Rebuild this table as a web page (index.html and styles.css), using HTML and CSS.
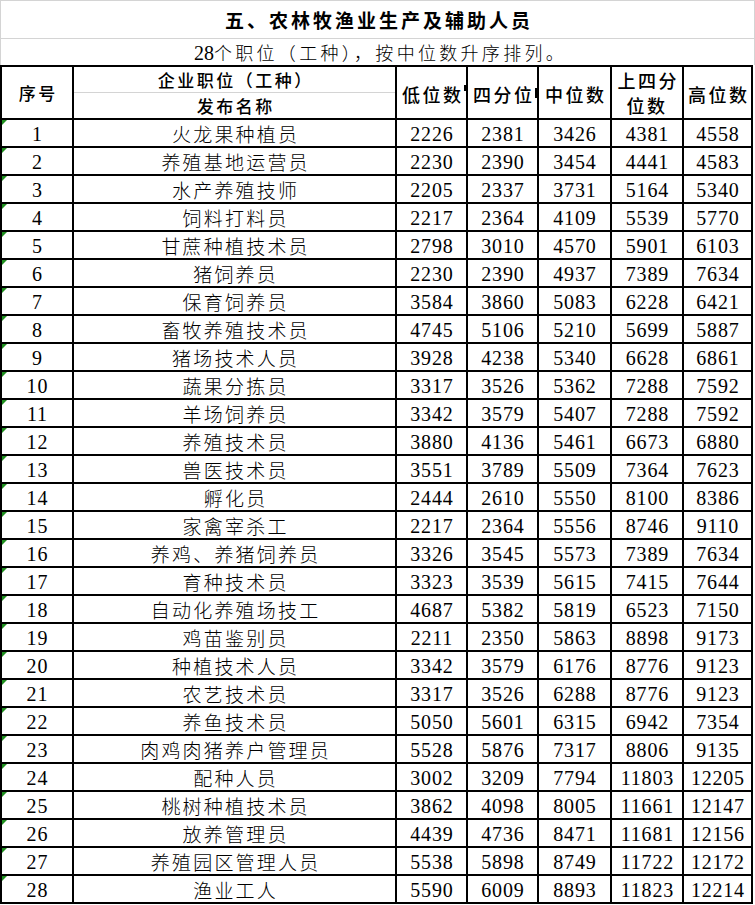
FILE: index.html
```html
<!DOCTYPE html>
<html lang="zh-CN">
<head>
<meta charset="utf-8">
<title>五、农林牧渔业生产及辅助人员</title>
<link rel="stylesheet" href="styles.css">
</head>
<body>
<div class="sheet">
  <div class="title">五、农林牧渔业生产及辅助人员</div>
  <div class="subtitle"><span class="num">28</span>个职位（工种），按中位数升序排列。</div>
  <table class="grid">
    <colgroup>
      <col class="c-no"><col class="c-name"><col class="c-v"><col class="c-v"><col class="c-v3"><col class="c-v4"><col class="c-v5">
    </colgroup>
    <thead>
      <tr class="h1">
        <th rowspan="2" class="hs">序号</th>
        <th class="hn top">企业职位（工种）</th>
        <th rowspan="2" class="hv clip-a">低位数</th>
        <th rowspan="2" class="hv clip-b">四分位</th>
        <th rowspan="2" class="hv">中位数</th>
        <th rowspan="2" class="hv two">上四分<br>位数</th>
        <th rowspan="2" class="hv">高位数</th>
      </tr>
      <tr class="h2">
        <th class="hn bot">发布名称</th>
      </tr>
    </thead>
    <tbody>
      <tr><td class="no">1</td><td class="nm">火龙果种植员</td><td>2226</td><td>2381</td><td>3426</td><td>4381</td><td>4558</td></tr>
      <tr><td class="no">2</td><td class="nm">养殖基地运营员</td><td>2230</td><td>2390</td><td>3454</td><td>4441</td><td>4583</td></tr>
      <tr><td class="no">3</td><td class="nm">水产养殖技师</td><td>2205</td><td>2337</td><td>3731</td><td>5164</td><td>5340</td></tr>
      <tr><td class="no">4</td><td class="nm">饲料打料员</td><td>2217</td><td>2364</td><td>4109</td><td>5539</td><td>5770</td></tr>
      <tr><td class="no">5</td><td class="nm">甘蔗种植技术员</td><td>2798</td><td>3010</td><td>4570</td><td>5901</td><td>6103</td></tr>
      <tr><td class="no">6</td><td class="nm">猪饲养员</td><td>2230</td><td>2390</td><td>4937</td><td>7389</td><td>7634</td></tr>
      <tr><td class="no">7</td><td class="nm">保育饲养员</td><td>3584</td><td>3860</td><td>5083</td><td>6228</td><td>6421</td></tr>
      <tr><td class="no">8</td><td class="nm">畜牧养殖技术员</td><td>4745</td><td>5106</td><td>5210</td><td>5699</td><td>5887</td></tr>
      <tr><td class="no">9</td><td class="nm">猪场技术人员</td><td>3928</td><td>4238</td><td>5340</td><td>6628</td><td>6861</td></tr>
      <tr><td class="no">10</td><td class="nm">蔬果分拣员</td><td>3317</td><td>3526</td><td>5362</td><td>7288</td><td>7592</td></tr>
      <tr><td class="no">11</td><td class="nm">羊场饲养员</td><td>3342</td><td>3579</td><td>5407</td><td>7288</td><td>7592</td></tr>
      <tr><td class="no">12</td><td class="nm">养殖技术员</td><td>3880</td><td>4136</td><td>5461</td><td>6673</td><td>6880</td></tr>
      <tr><td class="no">13</td><td class="nm">兽医技术员</td><td>3551</td><td>3789</td><td>5509</td><td>7364</td><td>7623</td></tr>
      <tr><td class="no">14</td><td class="nm">孵化员</td><td>2444</td><td>2610</td><td>5550</td><td>8100</td><td>8386</td></tr>
      <tr><td class="no">15</td><td class="nm">家禽宰杀工</td><td>2217</td><td>2364</td><td>5556</td><td>8746</td><td>9110</td></tr>
      <tr><td class="no">16</td><td class="nm">养鸡、养猪饲养员</td><td>3326</td><td>3545</td><td>5573</td><td>7389</td><td>7634</td></tr>
      <tr><td class="no">17</td><td class="nm">育种技术员</td><td>3323</td><td>3539</td><td>5615</td><td>7415</td><td>7644</td></tr>
      <tr><td class="no">18</td><td class="nm">自动化养殖场技工</td><td>4687</td><td>5382</td><td>5819</td><td>6523</td><td>7150</td></tr>
      <tr><td class="no">19</td><td class="nm">鸡苗鉴别员</td><td>2211</td><td>2350</td><td>5863</td><td>8898</td><td>9173</td></tr>
      <tr><td class="no">20</td><td class="nm">种植技术人员</td><td>3342</td><td>3579</td><td>6176</td><td>8776</td><td>9123</td></tr>
      <tr><td class="no">21</td><td class="nm">农艺技术员</td><td>3317</td><td>3526</td><td>6288</td><td>8776</td><td>9123</td></tr>
      <tr><td class="no">22</td><td class="nm">养鱼技术员</td><td>5050</td><td>5601</td><td>6315</td><td>6942</td><td>7354</td></tr>
      <tr><td class="no">23</td><td class="nm">肉鸡肉猪养户管理员</td><td>5528</td><td>5876</td><td>7317</td><td>8806</td><td>9135</td></tr>
      <tr><td class="no">24</td><td class="nm">配种人员</td><td>3002</td><td>3209</td><td>7794</td><td>11803</td><td>12205</td></tr>
      <tr><td class="no">25</td><td class="nm">桃树种植技术员</td><td>3862</td><td>4098</td><td>8005</td><td>11661</td><td>12147</td></tr>
      <tr><td class="no">26</td><td class="nm">放养管理员</td><td>4439</td><td>4736</td><td>8471</td><td>11681</td><td>12156</td></tr>
      <tr><td class="no">27</td><td class="nm">养殖园区管理人员</td><td>5538</td><td>5898</td><td>8749</td><td>11722</td><td>12172</td></tr>
      <tr><td class="no">28</td><td class="nm">渔业工人</td><td>5590</td><td>6009</td><td>8893</td><td>11823</td><td>12214</td></tr>
    </tbody>
  </table>
</div>
</body>
</html>
```

FILE: styles.css
```css
html, body {
  margin: 0;
  padding: 0;
  background: #ffffff;
}

body {
  font-family: "Liberation Serif", "Noto Sans CJK SC", serif;
  color: #000000;
}

.sheet {
  width: 755px;
  overflow: hidden;
}

.title {
  box-sizing: border-box;
  height: 39px;
  border: 1px solid #d4d4d4;
  font-family: "Noto Sans CJK SC", sans-serif;
  font-weight: 700;
  font-size: 19px;
  letter-spacing: 3px;
  line-height: 37px;
  text-align: center;
  padding-left: 3px;
}

.subtitle {
  box-sizing: border-box;
  height: 26px;
  border-left: 1px solid #d4d4d4;
  border-right: 1px solid #d4d4d4;
  font-family: "Noto Sans CJK SC", sans-serif;
  font-weight: 300;
  font-size: 18px;
  letter-spacing: 3.3px;
  line-height: 27px;
  text-align: center;
  padding-left: 6px;
}

.subtitle .num {
  font-family: "Liberation Serif", serif;
  font-size: 20px;
  letter-spacing: 0;
}

.grid {
  border-collapse: collapse;
  table-layout: fixed;
  width: 752px;
}

.c-no { width: 72px; }
.c-name { width: 323px; }
.c-v { width: 71px; }
.c-v3 { width: 73px; }
.c-v4 { width: 72px; }
.c-v5 { width: 69px; }

.grid th,
.grid td {
  border: 2px solid #000000;
  padding: 0;
  text-align: center;
  vertical-align: middle;
  overflow: hidden;
  white-space: nowrap;
}

.grid th {
  font-family: "Noto Sans CJK SC", sans-serif;
  font-weight: 500;
  font-size: 17px;
  letter-spacing: 2.5px;
  text-indent: 2.5px;
}

.h1 th.top {
  height: 24px;
  border-bottom: 1px solid #d4d4d4;
  line-height: 24px;
  padding-top: 1px;
}

.h2 th.bot {
  height: 24px;
  border-top: 1px solid #d4d4d4;
  line-height: 24px;
  padding-top: 1px;
}

.grid th.hv {
  font-size: 18px;
  letter-spacing: 2.5px;
  padding-top: 2px;
}

.grid th.two {
  line-height: 25px;
  padding-top: 0;
}

.grid th.clip-a,
.grid th.clip-b {
  position: relative;
}

.grid th.clip-a::after {
  content: "";
  position: absolute;
  right: 0;
  top: 18px;
  width: 2px;
  height: 6px;
  background: #000000;
}

.grid th.clip-b::after {
  content: "";
  position: absolute;
  right: 0;
  top: 21px;
  width: 2px;
  height: 10px;
  background: #000000;
}

.grid td {
  height: 24px;
  font-size: 20px;
  letter-spacing: 0.8px;
  text-indent: 0.8px;
  line-height: 24px;
  padding-top: 2px;
}

.grid td.no {
  position: relative;
}

.grid td.no::before {
  content: "";
  position: absolute;
  left: 0;
  top: 0;
  width: 0;
  height: 0;
  border-top: 5px solid #1f8f1f;
  border-right: 5px solid transparent;
}

.grid td.nm {
  font-family: "Noto Sans CJK SC", sans-serif;
  font-weight: 300;
  font-size: 19px;
  letter-spacing: 2.2px;
  text-indent: 2.2px;
}
```
